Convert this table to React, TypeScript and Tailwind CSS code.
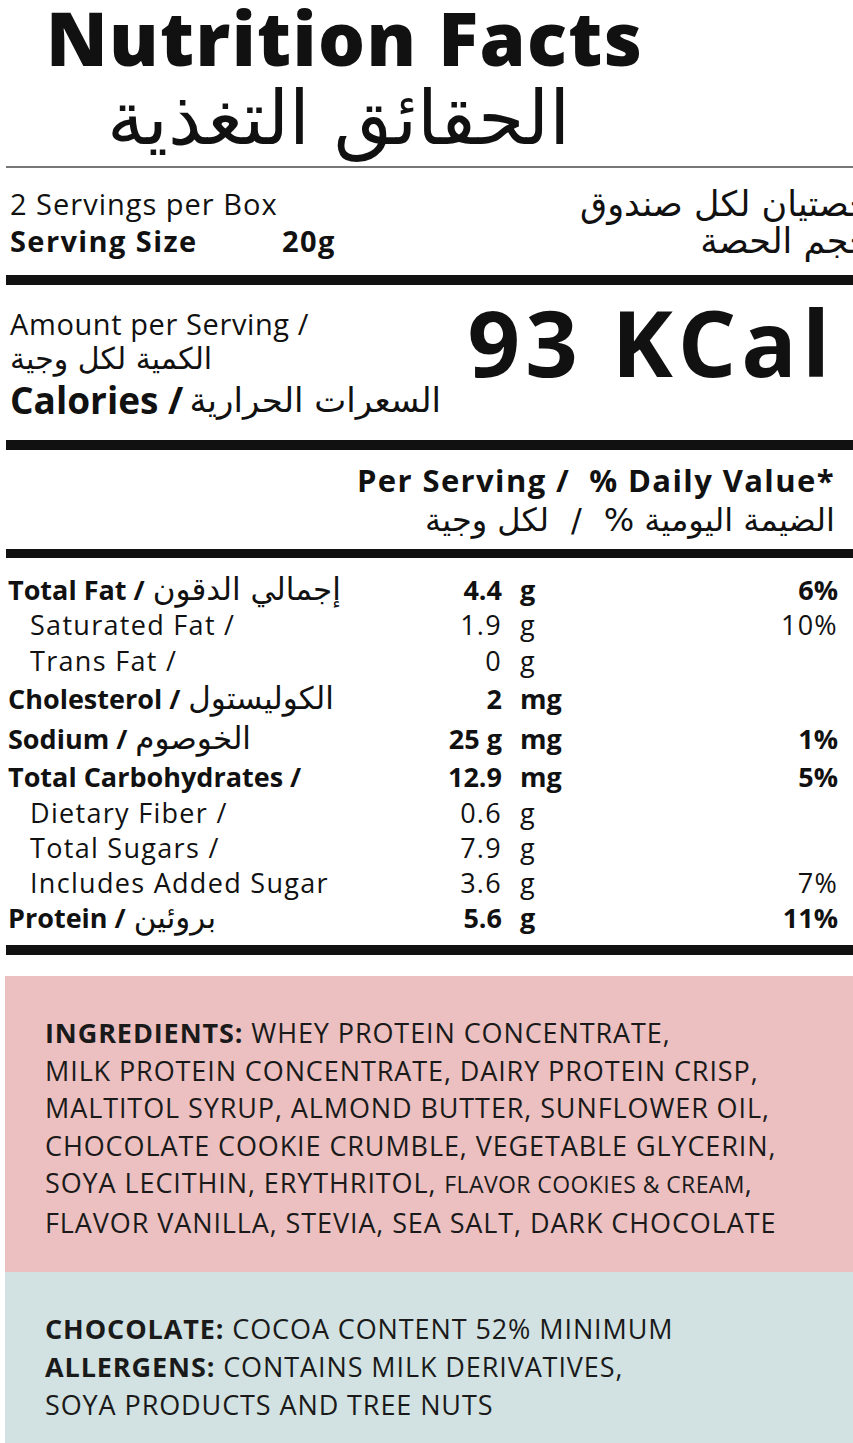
import React from 'react';

const latin = "font-['Open_Sans','DejaVu_Sans',sans-serif]";
const arabic = "font-['DejaVu_Sans','Noto_Sans',sans-serif]";

interface NutrientRow {
  en: string;
  ar?: string;
  amount: string;
  unit: string;
  dv?: string;
  bold?: boolean;
  sub?: boolean;
  h: string;
}

const rows: NutrientRow[] = [
  { en: 'Total Fat /', ar: 'إجمالي الدقون', amount: '4.4', unit: 'g', dv: '6%', bold: true, h: 'h-[35px]' },
  { en: 'Saturated Fat /', amount: '1.9', unit: 'g', dv: '10%', sub: true, h: 'h-[35px]' },
  { en: 'Trans Fat /', amount: '0', unit: 'g', sub: true, h: 'h-[37px]' },
  { en: 'Cholesterol /', ar: 'الكوليستول', amount: '2', unit: 'mg', bold: true, h: 'h-[39px]' },
  { en: 'Sodium /', ar: 'الخوصوم', amount: '25 g', unit: 'mg', dv: '1%', bold: true, h: 'h-[40px]' },
  { en: 'Total Carbohydrates /', amount: '12.9', unit: 'mg', dv: '5%', bold: true, h: 'h-[37px]' },
  { en: 'Dietary Fiber /', amount: '0.6', unit: 'g', sub: true, h: 'h-[35px]' },
  { en: 'Total Sugars /', amount: '7.9', unit: 'g', sub: true, h: 'h-[35px]' },
  { en: 'Includes Added Sugar', amount: '3.6', unit: 'g', dv: '7%', sub: true, h: 'h-[35px]' },
  { en: 'Protein /', ar: 'بروئين', amount: '5.6', unit: 'g', dv: '11%', bold: true, h: 'h-[35px]' },
];

const Row = ({ r }: { r: NutrientRow }) => {
  const weight = r.bold ? 'font-bold' : 'font-normal tracking-[1.3px]';
  return (
    <div className={`flex items-center ${r.h} text-[27px] leading-none text-[#111]`}>
      <div className={`w-[420px] flex items-center gap-[8px] ${r.sub ? 'pl-[30px]' : 'pl-[8px]'}`}>
        <span className={`${latin} ${weight}`}>{r.en}</span>
        {r.ar && <span dir="rtl" className={`${arabic} text-[31px] font-normal`}>{r.ar}</span>}
      </div>
      <div className={`w-[82px] text-right ${latin} ${weight}`}>{r.amount}</div>
      <div className={`ml-[18px] w-[80px] ${latin} ${weight}`}>{r.unit}</div>
      <div className={`flex-1 text-right pr-[15px] ${latin} ${weight}`}>{r.dv}</div>
    </div>
  );
};

const Bar = ({ className }: { className: string }) => (
  <div className={`ml-[6px] bg-[#111] ${className}`} />
);

const bodyText = `${latin} text-[27px] uppercase tracking-[0.9px] text-[#1a1a1a]`;

export default function App() {
  return (
    <div className="w-[853px] h-[1443px] bg-white overflow-hidden text-[#111]">
      {/* header */}
      <div className="h-[166px]">
        <div className={`${latin} font-extrabold text-[74px] leading-[76px] pl-[46px] tracking-[1.4px]`}>
          Nutrition Facts
        </div>
        <div dir="rtl" className={`${arabic} text-[75px] leading-[84px] w-[570px]`}>
          الحقائق التغذية
        </div>
      </div>
      <div className="ml-[6px] h-[2px] bg-[#777]" />

      {/* servings */}
      <div className="h-[107px] flex justify-between pt-[18px] overflow-hidden">
        <div className="pl-[10px]">
          <div className={`${latin} text-[29px] leading-[36px] tracking-[1px]`}>2 Servings per Box</div>
          <div className={`${latin} font-bold text-[29px] leading-[38px] flex tracking-[1.4px]`}>
            <span className="w-[272px]">Serving Size</span>
            <span>20g</span>
          </div>
        </div>
        <div dir="rtl" className={`${arabic} text-[35px] leading-[37px] -mr-[18px] text-right whitespace-nowrap`}>
          <div>حصتيان لكل صندوق</div>
          <div>حجم الحصة</div>
        </div>
      </div>
      <Bar className="h-[10px]" />

      {/* calories */}
      <div className="h-[155px] flex justify-between pt-[22px]">
        <div className="pl-[10px]">
          <div className={`${latin} text-[29px] leading-[34px] tracking-[0.6px]`}>Amount per Serving /</div>
          <div className="flex">
            <span dir="rtl" className={`${arabic} text-[30px] leading-[36px]`}>الكمية لكل وجية</span>
          </div>
          <div className="flex items-center gap-[6px] mt-[2px]">
            <span className={`${latin} font-bold text-[37px] leading-[42px]`}>Calories /</span>
            <span dir="rtl" className={`${arabic} text-[34px] leading-[42px]`}>السعرات الحرارية</span>
          </div>
        </div>
        <div className={`${latin} font-bold text-[92px] leading-[92px] pr-[18px] tracking-[5px] -mt-[11px]`}>93 KCal</div>
      </div>
      <Bar className="h-[10px]" />

      {/* column header */}
      <div className="h-[99px] flex flex-col items-end pr-[18px] pt-[10px]">
        <div className={`${latin} font-bold text-[31px] leading-[40px] tracking-[1.4px]`}>Per Serving / &nbsp;% Daily Value*</div>
        <div className={`${arabic} text-[32px] leading-[40px] flex gap-[22px]`}>
          <span dir="rtl">لكل وجية</span>
          <span>/</span>
          <span dir="rtl">الضيمة اليومية %</span>
        </div>
      </div>
      <Bar className="h-[9px]" />

      {/* nutrients */}
      <div className="pt-[14px] h-[387px]">
        {rows.map((r) => (
          <Row key={r.en} r={r} />
        ))}
      </div>
      <Bar className="h-[10px]" />

      {/* ingredients */}
      <div className="mt-[21px] ml-[5px] h-[296px] bg-[#ecc0c0] pl-[40px] pt-[38px]">
        <p className={`${bodyText} leading-[37.6px] whitespace-nowrap`}>
          <span className="font-bold">Ingredients: </span>
          Whey protein concentrate,
          <br />
          Milk protein concentrate, dairy protein crisp,
          <br />
          Maltitol syrup, almond butter, sunflower oil,
          <br />
          Chocolate cookie crumble, vegetable glycerin,
          <br />
          Soya lecithin, erythritol, <span className="text-[23px] tracking-[0.4px]">flavor cookies &amp; cream</span>,
          <br />
          Flavor vanilla, stevia, sea salt, dark chocolate
        </p>
      </div>

      {/* allergens */}
      <div className="ml-[5px] h-[172px] bg-[#d2e2e2] pl-[40px] pt-[38px]">
        <p className={`${bodyText} leading-[38px] whitespace-nowrap`}>
          <span className="font-bold">Chocolate: </span>Cocoa content 52% minimum
        </p>
        <p className={`${bodyText} leading-[38px] whitespace-nowrap`}>
          <span className="font-bold">Allergens: </span>Contains milk derivatives,
          <br />
          Soya products and tree nuts
        </p>
      </div>
    </div>
  );
}
